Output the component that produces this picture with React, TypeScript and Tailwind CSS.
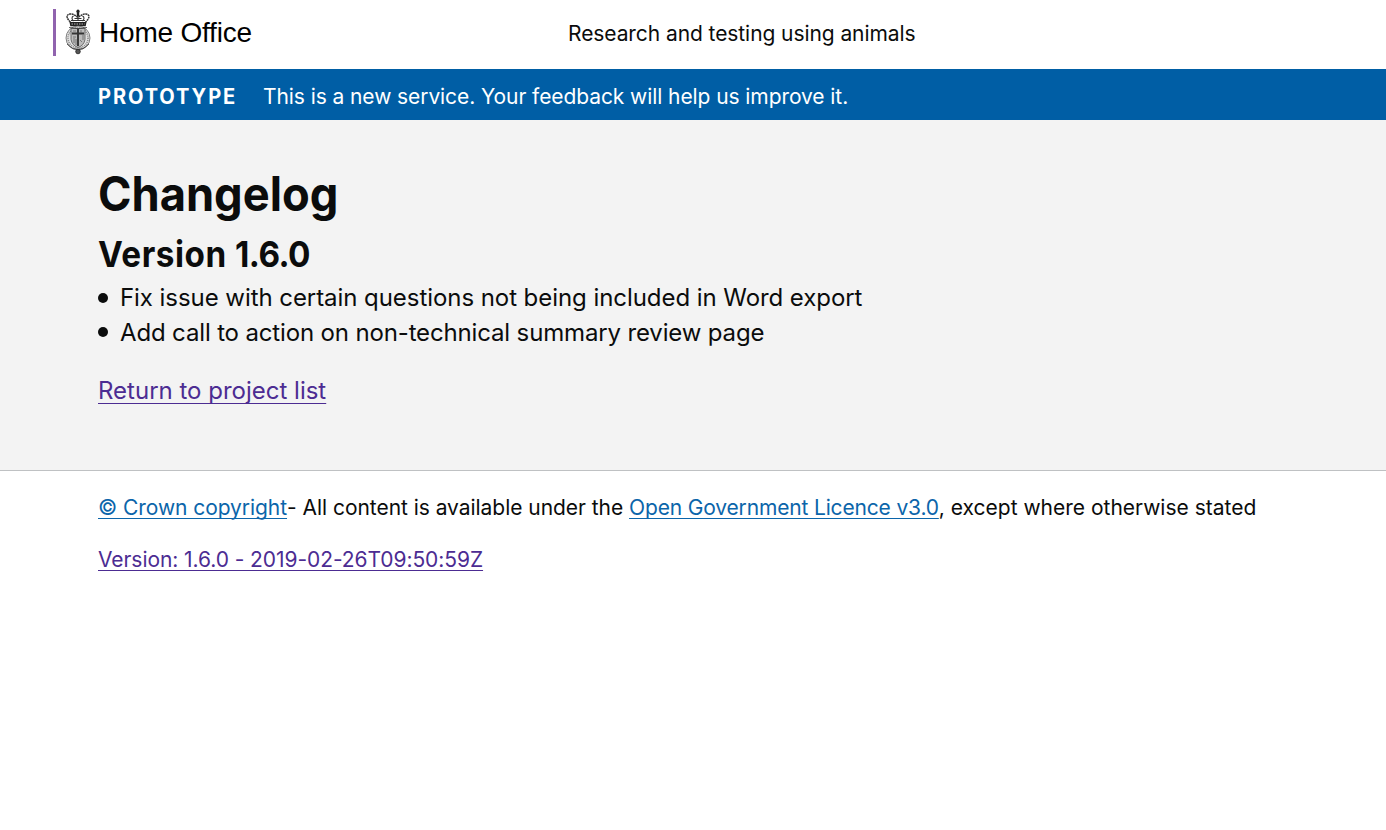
function Crest() {
  return (
    <svg viewBox="0 0 28 46" className="-mt-[2px] h-[46px] w-[28px] shrink-0" fill="none" stroke="#333" strokeWidth="0.8">
      <g fill="#222" stroke="none">
        <circle cx="14" cy="2.2" r="1.6" />
        <path d="M12.8 3h2.4v4h-2.4z" />
        <path d="M5.500 13h17l-.8 4.200H6.300z" />
      </g>
      <path d="M6.500 13C2 9 2 5.500 6 5s5.500 2.500 8 3c2.500-.5 4-3.500 8-3s4 4 -.5 8" strokeWidth="1.500" strokeDasharray="2 0.500" />
      <path d="M9.500 12c-2-2-2-4 0-5M18.500 12c2-2 2-4 0-5M14 7v5M10.500 9.500h7M7 11.500h14" strokeWidth="1.100" />
      <path d="M7.500 15h13" stroke="#ddd" strokeDasharray="1.500 1" />
      <ellipse cx="14" cy="29" rx="12" ry="12" stroke="#666" fill="#e2e2e2" />
      <ellipse cx="14" cy="29" rx="10" ry="10" stroke="#888" strokeWidth="1.600" strokeDasharray="1 1" />
      <path d="M7 19.500h14v11q-1 6-7 8-6-2-7-8z" fill="#bbb" stroke="#555" />
      <path d="M8 24.500h12M14 20v17" stroke="#333" strokeWidth="1.900" />
      <path d="M9 22h3M9 28h3M17 21v3M19 26v5M16 31l2 2M10 29v5M12 30v6" stroke="#666" />
      <path d="M5 18.500q9 2 18 0M3 35q5 5.500 11 5.500t11-5.500" />
      <circle cx="14" cy="42.500" r="2.300" fill="#555" stroke="#222" />
    </svg>
  );
}

export default function App() {
  return (
    <div className="min-h-screen bg-white font-['Inter',sans-serif] text-[#0b0c0c] antialiased">
      <header className="flex h-[69px] items-start pl-[53px]">
        <div className="mt-[9px] flex h-[47px] w-[515px] items-center border-l-3 border-[#9063ae] pl-[8px]">
          <Crest />
          <span className="ml-[7px] font-['Liberation_Sans',sans-serif] text-[28px] leading-8 tracking-[-0.2px] text-black">Home Office</span>
        </div>
        <p className="pt-[19px] text-[21px] leading-[30px] tracking-[-0.08px]">Research and testing using animals</p>
      </header>
      <section className="flex h-[51px] items-center bg-[#005ea5] pt-[4px] pl-[98px] text-[21px] text-white">
        <strong className="w-[165px] font-bold"><span className="inline-block origin-left scale-x-[0.955] tracking-[2px]">PROTOTYPE</span></strong>
        <span className="tracking-[-0.08px]">This is a new service. Your feedback will help us improve it.</span>
      </section>
      <main className="h-[351px] border-b border-[#bfc1c3] bg-[#f3f3f3] px-[98px] pt-[44px]">
        <h1 className="origin-left scale-x-[0.943] text-[48px] leading-[60px] font-bold">Changelog</h1>
        <h2 className="mt-[9px] origin-left scale-x-[0.925] text-[36px] leading-[42px] font-bold"><span className="tracking-[0.55px]">Version </span><span className="tracking-[-0.6px]">1.6.0</span></h2>
        <ul className="mt-[5px] text-[24px] leading-[35px]">
          <li className="flex items-center gap-[12px]"><i className="size-[10px] rounded-full bg-[#0b0c0c]" /><span className="tracking-[-0.06px]">Fix issue with certain questions not being included in Word export</span></li>
          <li className="flex h-[34px] items-center gap-[12px]"><i className="size-[10px] rounded-full bg-[#0b0c0c]" /><span className="tracking-[-0.15px]">Add call to action on non-technical summary review page</span></li>
        </ul>
        <a href="#" className="mt-[24px] inline-block text-[24px] leading-[35px] text-[#4c2c92] underline decoration-1 underline-offset-[4px] [text-decoration-skip-ink:none]">Return to project list</a>
      </main>
      <footer className="px-[98px] pt-[22px] text-[21px] leading-[30px]">
        <p className="whitespace-nowrap"><a href="#" className="tracking-[-0.06px] text-[#0b65aa] underline decoration-1 underline-offset-[3px] [text-decoration-skip-ink:none]">© Crown copyright</a><span className="tracking-[-0.04px]">- All content is available under the </span><a href="#" className="tracking-[-0.16px] text-[#0b65aa] underline decoration-1 underline-offset-[3px] [text-decoration-skip-ink:none]">Open Government Licence v3.0</a><span>, except where otherwise stated</span></p>
        <p className="mt-[22px]"><a href="#" className="tracking-[-0.07px] text-[#4c2c92] underline decoration-1 underline-offset-[3px] [text-decoration-skip-ink:none]">Version: 1.6.0 - 2019-02-26T09:50:59Z</a></p>
      </footer>
    </div>
  );
}
